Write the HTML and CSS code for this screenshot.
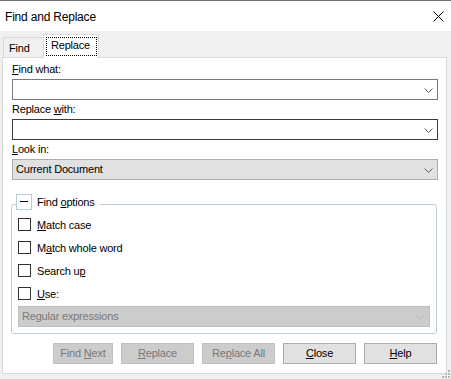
FILE: index.html
```html
<!DOCTYPE html>
<html>
<head>
<meta charset="utf-8">
<title>Find and Replace</title>
<link rel="stylesheet" href="styles.css">
</head>
<body>
<div class="window">
  <div class="titlebar">
    <span class="title">Find and Replace</span>
    <svg class="close" width="11" height="11" viewBox="0 0 11 11"><path d="M0.5 0.5 L10.5 10.5 M10.5 0.5 L0.5 10.5" stroke="#000" stroke-width="1" fill="none"/></svg>
  </div>
  <div class="tabs">
    <div class="tab">Find</div>
    <div class="tab active"><span class="focus">Replace</span></div>
  </div>
  <div class="panel">
    <div class="label"><u>F</u>ind what:</div>
    <div class="combo">
      <span class="combo-text"></span>
      <svg class="chev" width="9" height="5" viewBox="0 0 9 5"><path d="M0.5 0.5 L4.5 4.5 L8.5 0.5" stroke="#606060" fill="none"/></svg>
    </div>
    <div class="label gap">Replace <u>w</u>ith:</div>
    <div class="combo dark">
      <span class="combo-text"></span>
      <svg class="chev" width="9" height="5" viewBox="0 0 9 5"><path d="M0.5 0.5 L4.5 4.5 L8.5 0.5" stroke="#606060" fill="none"/></svg>
    </div>
    <div class="label gap"><u>L</u>ook in:</div>
    <div class="combo readonly">
      <span class="combo-text">Current Document</span>
      <svg class="chev" width="9" height="5" viewBox="0 0 9 5"><path d="M0.5 0.5 L4.5 4.5 L8.5 0.5" stroke="#606060" fill="none"/></svg>
    </div>

    <div class="group">
      <div class="group-head">
        <span class="toggle"><svg width="14" height="14" viewBox="0 0 14 14"><path d="M3 6.5 H11" stroke="#000" fill="none"/></svg></span>
        <span class="group-title">Find <u>o</u>ptions</span>
      </div>
      <div class="row first"><span class="check"></span><span><u>M</u>atch case</span></div>
      <div class="row"><span class="check"></span><span>M<u>a</u>tch whole word</span></div>
      <div class="row"><span class="check"></span><span>Search u<u>p</u></span></div>
      <div class="row"><span class="check"></span><span><u>U</u>se:</span></div>
      <div class="combo disabled">
        <span class="combo-text">Regular expressions</span>
        <svg class="chev" width="9" height="5" viewBox="0 0 9 5"><path d="M0.5 0.5 L4.5 4.5 L8.5 0.5" stroke="#b4b4b4" fill="none"/></svg>
      </div>
    </div>

    <div class="buttons">
      <div class="btn off narrow">Find <u>N</u>ext</div>
      <div class="btn off"><u>R</u>eplace</div>
      <div class="btn off">Re<u>p</u>lace All</div>
      <div class="btn"><u>C</u>lose</div>
      <div class="btn"><u>H</u>elp</div>
    </div>
  </div>
  <svg class="grip" width="9" height="10" viewBox="0 0 9 10">
    <rect x="6" y="1" width="2" height="2" fill="#b8b8b8"/>
    <rect x="3" y="4" width="2" height="2" fill="#b8b8b8"/>
    <rect x="6" y="4" width="2" height="2" fill="#b8b8b8"/>
    <rect x="0" y="7" width="2" height="2" fill="#b8b8b8"/>
    <rect x="3" y="7" width="2" height="2" fill="#b8b8b8"/>
    <rect x="6" y="7" width="2" height="2" fill="#b8b8b8"/>
  </svg>
</div>
</body>
</html>
```
FILE: styles.css
```css
html, body {
  margin: 0;
  padding: 0;
  background: #f0f0f0;
}
body {
  font-family: "Liberation Sans", Arial, sans-serif;
  font-size: 11px;
  letter-spacing: -0.2px;
  color: #000;
}
u {
  text-decoration: underline;
  text-underline-offset: 1px;
}
.window {
  position: relative;
  width: 451px;
  height: 379px;
  box-sizing: border-box;
  border-top: 1px solid #6f6f6f;
  background: #f0f0f0;
  overflow: hidden;
}
.titlebar {
  height: 30px;
  background: #fff;
  display: flex;
  align-items: center;
  padding-left: 5px;
}
.title {
  font-size: 12px;
  line-height: 14px;
  letter-spacing: -0.2px;
  padding-top: 1px;
}
.close {
  margin-left: auto;
  margin-right: 7px;
  margin-top: 1px;
}
.tabs {
  display: flex;
  align-items: flex-end;
  padding: 3px 0 0 3px;
}
.tab {
  box-sizing: border-box;
  height: 20px;
  width: 41px;
  border: 1px solid #d9d9d9;
  border-bottom: none;
  background: #f0f0f0;
  padding: 3px 0 0 5px;
  line-height: 14px;
}
.tab.active {
  position: relative;
  z-index: 1;
  height: 24px;
  width: 56px;
  margin-left: -1px;
  margin-bottom: -1px;
  background: #fff;
  padding: 2px 1px 0 2px;
}
.focus {
  display: block;
  box-sizing: border-box;
  height: 19px;
  border: 1px dotted #000;
  padding: 0 0 0 4px;
  line-height: 14px;
}
.panel {
  box-sizing: border-box;
  width: 445px;
  margin-left: 2px;
  background: #fff;
  border: 1px solid #d9d9d9;
  padding: 4px 8px 9px 9px;
}
.label {
  line-height: 14px;
  height: 14px;
  margin-bottom: 3px;
}
.label.gap {
  margin-top: 2px;
}
.combo {
  box-sizing: border-box;
  height: 21px;
  border: 1px solid #7a7a7a;
  background: #fff;
  display: flex;
  align-items: center;
  justify-content: space-between;
  padding: 0 4px 0 3px;
  line-height: 19px;
}
.combo.dark {
  border-color: #3c3c3c;
}
.combo.readonly {
  background: #e1e1e1;
  border-color: #adadad;
}
.combo.disabled {
  background: #cccccc;
  border-color: #bfbfbf;
  color: #7a7a7a;
  margin-top: 1px;
}
.chev {
  display: block;
  margin-top: 1px;
}
.group {
  margin: 24px 1px 0 -1px;
  border: 1px solid #bccfd8;
  border-radius: 3px;
  padding: 0 6px 6px 6px;
}
.group-head {
  display: flex;
  align-items: center;
  width: max-content;
  height: 16px;
  margin-top: -11px;
  margin-left: -2px;
}
.toggle {
  box-sizing: border-box;
  width: 16px;
  height: 16px;
  border: 1px solid #b9ccd5;
  background: #fff;
}
.toggle svg {
  display: block;
}
.group-title {
  background: #fff;
  line-height: 14px;
  padding: 1px 5px 1px 5px;
}
.row {
  display: flex;
  align-items: center;
  height: 23px;
  line-height: 14px;
}
.row.first {
  margin-top: 3px;
}
.check {
  box-sizing: border-box;
  width: 13px;
  height: 13px;
  border: 1px solid #333;
  background: #fff;
  margin-right: 6px;
}
.buttons {
  display: flex;
  justify-content: flex-end;
  gap: 8px;
  margin-top: 9px;
  padding-right: 1px;
}
.btn {
  box-sizing: border-box;
  width: 73px;
  height: 21px;
  border: 1px solid #adadad;
  background: #e1e1e1;
  text-align: center;
  line-height: 19px;
}
.btn.narrow {
  width: 60px;
}
.btn.off {
  background: #cccccc;
  border-color: #bfbfbf;
  color: #787878;
}
.grip {
  position: absolute;
  right: 0;
  bottom: 0;
}
```
